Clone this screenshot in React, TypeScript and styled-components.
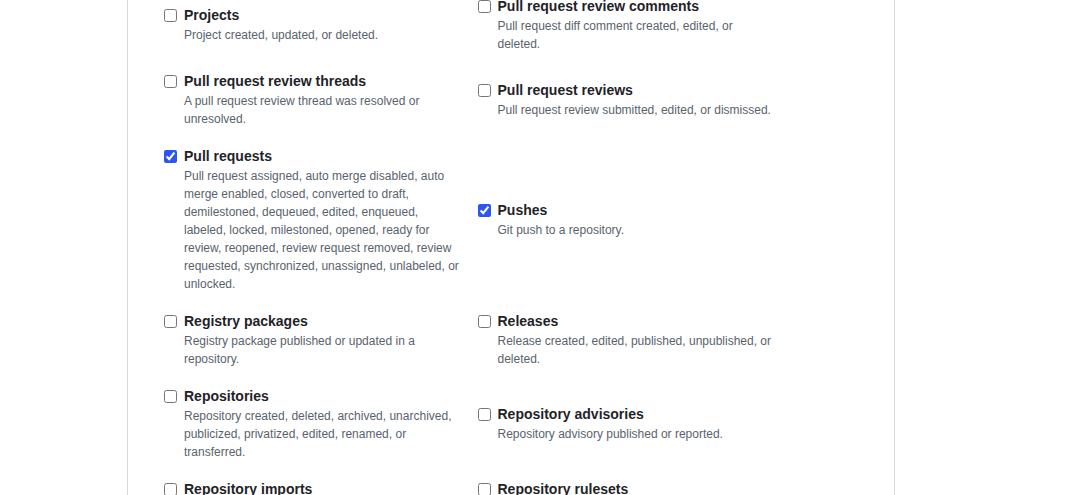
import { FunctionComponent } from 'react';
import { styled, createGlobalStyle } from 'styled-components';

interface EventOption {
  title: string;
  description: string;
  checked?: boolean;
}

const events: EventOption[] = [
  { title: 'Projects', description: 'Project created, updated, or deleted.' },
  {
    title: 'Pull request review comments',
    description: 'Pull request diff comment created, edited, or deleted.',
  },
  {
    title: 'Pull request review threads',
    description: 'A pull request review thread was resolved or unresolved.',
  },
  {
    title: 'Pull request reviews',
    description: 'Pull request review submitted, edited, or dismissed.',
  },
  {
    title: 'Pull requests',
    description:
      'Pull request assigned, auto merge disabled, auto merge enabled, closed, converted to draft, demilestoned, dequeued, edited, enqueued, labeled, locked, milestoned, opened, ready for review, reopened, review request removed, review requested, synchronized, unassigned, unlabeled, or unlocked.',
    checked: true,
  },
  { title: 'Pushes', description: 'Git push to a repository.', checked: true },
  {
    title: 'Registry packages',
    description: 'Registry package published or updated in a repository.',
  },
  {
    title: 'Releases',
    description: 'Release created, edited, published, unpublished, or deleted.',
  },
  {
    title: 'Repositories',
    description:
      'Repository created, deleted, archived, unarchived, publicized, privatized, edited, renamed, or transferred.',
  },
  {
    title: 'Repository advisories',
    description: 'Repository advisory published or reported.',
  },
  {
    title: 'Repository imports',
    description: 'Repository import succeeded, failed, or cancelled.',
  },
  {
    title: 'Repository rulesets',
    description: 'Repository ruleset created, deleted or edited.',
  },
];

const EventItem: FunctionComponent<EventOption> = ({
  title,
  description,
  checked,
}) => (
  <Item>
    <Checkbox type="checkbox" defaultChecked={checked} />
    <ItemText>
      <ItemTitle>{title}</ItemTitle>
      <ItemNote>{description}</ItemNote>
    </ItemText>
  </Item>
);

const App: FunctionComponent = () => (
  <>
    <GlobalStyle />
    <Panel>
      <EventGrid>
        {events.map((event) => (
          <EventItem key={event.title} {...event} />
        ))}
      </EventGrid>
    </Panel>
  </>
);

const GlobalStyle = createGlobalStyle`
  html, body {
    margin: 0;
    height: 100%;
    overflow: hidden;
    background: #ffffff;
  }
  body {
    font-family: "Liberation Sans", Arial, sans-serif;
    color: #1f2328;
  }
`;

const Panel = styled.div`
  margin-left: 127px;
  width: 766px;
  min-height: 100vh;
  border-left: 1px solid #d1d9e0;
  border-right: 1px solid #d1d9e0;
  overflow: hidden;
`;

const EventGrid = styled.div`
  display: grid;
  grid-template-columns: 313.5px 313.5px;
  row-gap: 18px;
  align-items: center;
  margin-top: -4px;
  padding-left: 36px;
`;

const Item = styled.label`
  display: flex;
  align-items: flex-start;
  gap: 7px;
`;

const Checkbox = styled.input`
  width: 13px;
  height: 13px;
  margin: 4px 0 0;
  flex-shrink: 0;
  accent-color: #2f55f0;
`;

const ItemText = styled.div`
  display: flex;
  flex-direction: column;
  max-width: 278px;
`;

const ItemTitle = styled.span`
  font-size: 14px;
  font-weight: bold;
  line-height: 21px;
  color: #1f2328;
`;

const ItemNote = styled.span`
  font-size: 12px;
  line-height: 18px;
  color: #59636e;
`;

export default App;
